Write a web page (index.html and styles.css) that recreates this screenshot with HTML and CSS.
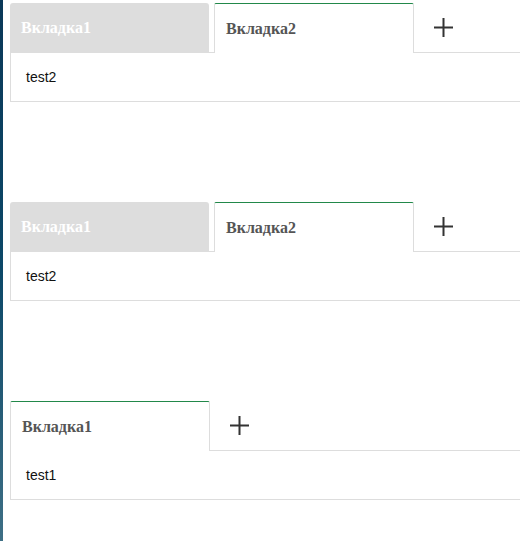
FILE: index.html
```html
<!DOCTYPE html>
<html>
<head>
<meta charset="utf-8">
<link rel="stylesheet" href="styles.css">
</head>
<body>
<div class="page">
  <div class="stripe"></div>
  <main class="main">
    <section class="tabset">
      <div class="tabbar">
        <div class="tab tab-inactive">Вкладка1</div>
        <div class="tab-gap"></div>
        <div class="tab tab-active">Вкладка2</div>
        <div class="tab-add"><svg width="19" height="19" viewBox="0 0 19 19"><path d="M0 9.5H19M9.5 0V19" stroke="#333" stroke-width="2" fill="none"/></svg></div>
      </div>
      <div class="panel">test2</div>
    </section>
    <section class="tabset">
      <div class="tabbar">
        <div class="tab tab-inactive">Вкладка1</div>
        <div class="tab-gap"></div>
        <div class="tab tab-active">Вкладка2</div>
        <div class="tab-add"><svg width="19" height="19" viewBox="0 0 19 19"><path d="M0 9.5H19M9.5 0V19" stroke="#333" stroke-width="2" fill="none"/></svg></div>
      </div>
      <div class="panel">test2</div>
    </section>
    <section class="tabset">
      <div class="tabbar">
        <div class="tab tab-active">Вкладка1</div>
        <div class="tab-add"><svg width="19" height="19" viewBox="0 0 19 19"><path d="M0 9.5H19M9.5 0V19" stroke="#333" stroke-width="2" fill="none"/></svg></div>
      </div>
      <div class="panel">test1</div>
    </section>
  </main>
</div>
</body>
</html>
```
FILE: styles.css
```css
html, body {
  margin: 0;
  padding: 0;
  overflow: hidden;
  background: #fff;
}
.page {
  display: flex;
  min-height: 541px;
}
.stripe {
  width: 3px;
  flex: none;
  background: linear-gradient(to bottom, #0a3858 0%, #0c4868 50%, #3e6f85 100%);
}
.main {
  flex: 1;
  min-width: 0;
  overflow: hidden;
  padding: 3px 0 0 7px;
  display: flex;
  flex-direction: column;
  gap: 100px;
}
.tabset {
  width: 540px;
  flex: none;
}
.tabbar {
  display: flex;
  height: 50px;
}
.tab {
  box-sizing: border-box;
  width: 200px;
  padding-left: 11px;
  display: flex;
  align-items: center;
  font-family: "Liberation Serif", "Times New Roman", serif;
  font-weight: bold;
  font-size: 16px;
}
.tab-inactive {
  width: 199px;
  background: #dddddd;
  color: #fff;
  border-radius: 3px 3px 0 0;
  border-bottom: 1px solid #dddddd;
}
.tab-gap {
  width: 5px;
  border-bottom: 1px solid #dddddd;
  box-sizing: border-box;
}
.tab-active {
  background: #fff;
  color: #555;
  border-top: 1px solid #22884a;
  border-left: 1px solid #dddddd;
  border-right: 1px solid #dddddd;
  border-radius: 2px 2px 0 0;
}
.tab-add {
  flex: 1;
  box-sizing: border-box;
  display: flex;
  align-items: center;
  padding-left: 20px;
  border-bottom: 1px solid #dddddd;
}
.tab-add svg {
  display: block;
}
.panel {
  box-sizing: border-box;
  height: 49px;
  border: 1px solid #dddddd;
  border-top: none;
  padding-left: 15px;
  display: flex;
  align-items: center;
  font-family: "Liberation Sans", Arial, sans-serif;
  font-size: 14px;
  color: #111;
}
```
